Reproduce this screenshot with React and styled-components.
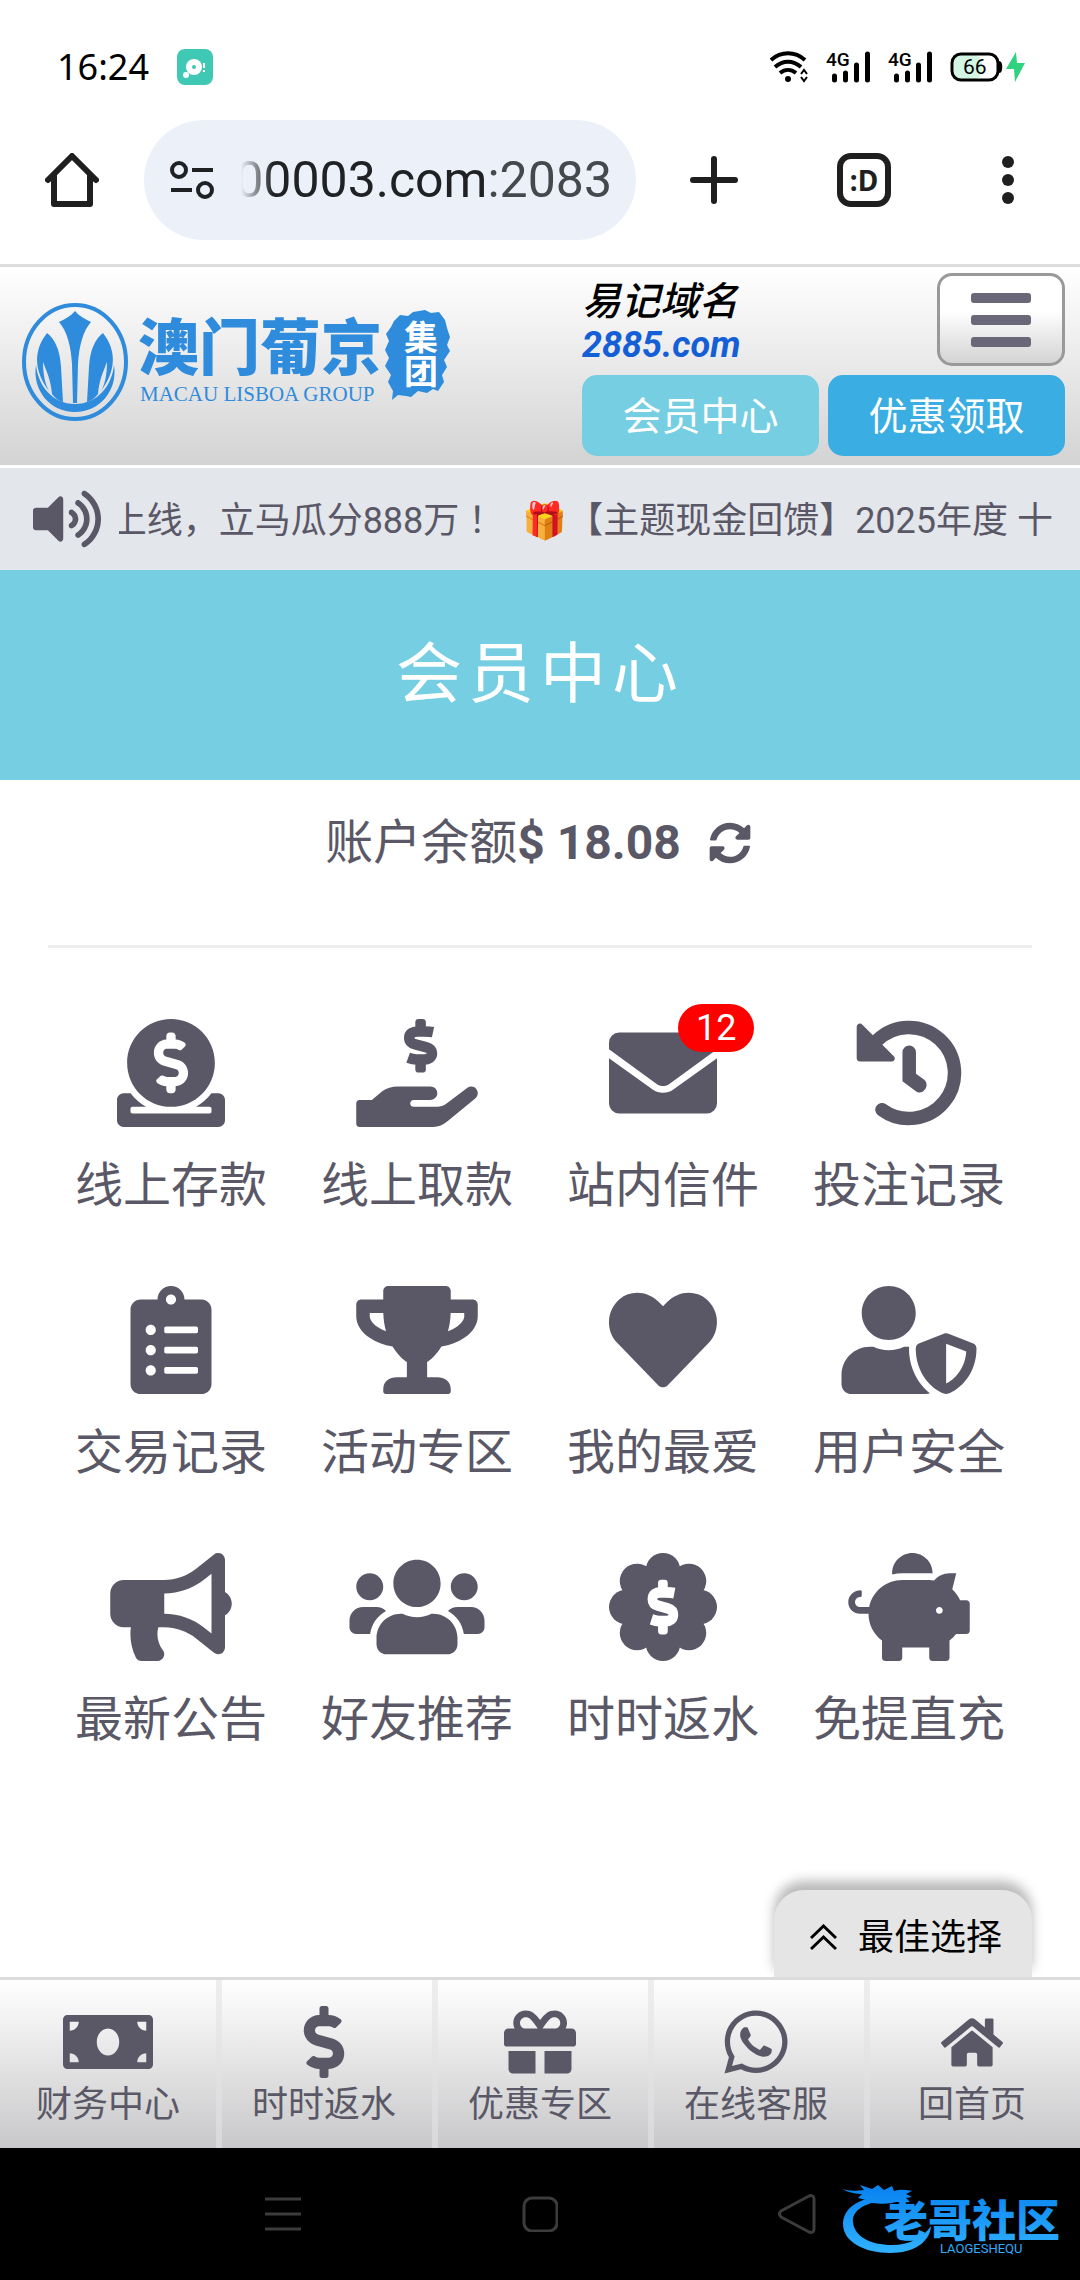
import React from 'react';
import styled, { createGlobalStyle } from 'styled-components';
import {
  FaBullhorn,
  FaClipboardList,
  FaDollarSign,
  FaDonate,
  FaGift,
  FaHeart,
  FaHome,
  FaMoneyBill,
  FaPiggyBank,
  FaSyncAlt,
  FaTrophy,
  FaUserShield,
  FaUsers,
  FaVolumeUp,
  FaWhatsapp
} from 'react-icons/fa';

const ink = '#5a5866';

const GlobalStyle = createGlobalStyle`
  * {
    box-sizing: border-box;
  }
  body {
    margin: 0;
    background: #fff;
    color: ${ink};
    font-family: Roboto, 'Noto Sans CJK SC', sans-serif;
    font-size: 36px;
  }
  button {
    margin: 0;
    padding: 0;
    border: 0;
    background: none;
    color: inherit;
    font: inherit;
  }
  a {
    color: inherit;
    text-decoration: none;
  }
  svg {
    display: block;
    flex: none;
  }
`;

const Page = styled.div`
  display: flex;
  flex-direction: column;
  min-height: 100vh;
`;

/* phone status bar */
const StatusBar = styled.div`
  display: flex;
  align-items: center;
  height: 120px;
  padding: 14px 54px 0 57px;
  color: #000;
`;
const Clock = styled.time`
  font-family: 'Noto Sans', sans-serif;
  font-size: 36px;
  line-height: 48px;
`;
const StatusIcons = styled.div`
  display: flex;
  align-items: center;
  gap: 18px;
  margin-left: auto;
`;
const AppBadge = styled.svg`
  margin-left: 28px;
`;

/* browser toolbar */
const Toolbar = styled.div`
  display: flex;
  align-items: center;
  height: 147px;
  padding: 0 54px 24px 45px;
  border-bottom: 3px solid #dedede;
  color: #1f1f1f;
`;
const AddressBar = styled.button`
  display: flex;
  flex: 1;
  align-items: center;
  gap: 26px;
  min-width: 0;
  height: 120px;
  margin: 0 54px 0 45px;
  padding: 0 24px 0 26px;
  border-radius: 60px;
  background: #ebf0f9;
`;
const Url = styled.span`
  display: flex;
  flex: 1;
  justify-content: flex-end;
  min-width: 0;
  overflow: hidden;
  color: #1f2124;
  font-size: 50px;
  line-height: 60px;
  white-space: nowrap;
  mask-image: linear-gradient(to right, transparent, #000 32px);
`;
const Port = styled.span`
  color: #45494d;
`;
const ToolbarButtons = styled.div`
  display: flex;
  align-items: center;
  gap: 99px;
`;
const TabSwitcher = styled.button`
  width: 54px;
  height: 54px;
  border: 6px solid #1f1f1f;
  border-radius: 14px;
  font-family: 'Noto Sans', sans-serif;
  font-size: 28px;
  font-weight: 700;
  line-height: 38px;
`;

/* site header */
const Header = styled.header`
  display: flex;
  align-items: center;
  justify-content: space-between;
  padding: 6px 15px 9px 18px;
  border-bottom: 3px solid #fff;
  background: linear-gradient(#fff, #d3d3d3);
`;
const HeaderSide = styled.div`
  display: grid;
  grid-template-columns: 1fr 1fr;
  gap: 9px;
  width: 483px;
`;
const Domain = styled.div`
  padding-top: 7px;
  font-style: italic;
  font-size: 39px;
  font-weight: 500;
  line-height: 45px;
  color: #000;
`;
const DomainLink = styled.a`
  display: block;
  color: #155fd6;
  font-size: 36px;
  font-weight: 700;
  line-height: 41px;
`;
const MenuButton = styled.button`
  display: flex;
  flex-direction: column;
  align-items: center;
  justify-content: center;
  gap: 12px;
  justify-self: end;
  width: 128px;
  height: 93px;
  border: 3px solid #999;
  border-radius: 15px;
  background: linear-gradient(#fff 40%, #d3d3d3);
`;
const MenuBar = styled.span`
  width: 60px;
  height: 10px;
  border-radius: 3px;
  background: #696778;
`;
const HeaderLink = styled.a`
  padding-top: 4px;
  border-radius: 15px;
  background: ${props => props.$color};
  color: #fff;
  font-size: 39px;
  line-height: 77px;
  text-align: center;
`;

const Notice = styled.div`
  display: flex;
  align-items: center;
  gap: 18px;
  height: 102px;
  padding: 0 27px 0 33px;
  background: #e3e6eb;
`;
const NoticeText = styled.div`
  display: flex;
  flex: 1;
  justify-content: flex-end;
  min-width: 0;
  overflow: hidden;
  line-height: 48px;
  white-space: pre;
`;
/* full-width mark centred in its box */
const Mark = styled.span`
  font-family: 'Noto Sans CJK TC', sans-serif;
`;

const Title = styled.h1`
  margin: 0;
  background: #75cee1;
  color: #fff;
  font-size: 66px;
  font-weight: 400;
  letter-spacing: 6px;
  line-height: 210px;
  text-align: center;
`;

const Main = styled.main`
  display: flex;
  flex: 1;
  flex-direction: column;
  padding: 0 48px;
`;
const Balance = styled.div`
  display: flex;
  align-items: center;
  justify-content: center;
  height: 168px;
  padding-bottom: 39px;
  border-bottom: 3px solid #eee;
  font-size: 48px;
  line-height: 60px;
  white-space: pre;
`;
const Refresh = styled.button`
  margin: 0 4px 0 28px;
`;

const Grid = styled.nav`
  display: grid;
  grid-template-columns: repeat(4, 1fr);
  padding-top: 71px;
`;
const Tile = styled.a`
  display: flex;
  flex-direction: column;
  align-items: center;
  gap: 29px;
  height: 267px;
  font-size: 48px;
  line-height: 60px;
`;
const TileIcon = styled.span`
  position: relative;
  svg {
    width: 144px;
    height: 108px;
  }
`;
const Count = styled.span`
  position: absolute;
  top: -15px;
  left: 87px;
  padding: 0 18px;
  border-radius: 24px;
  background: #f00;
  color: #fff;
  font-size: 36px;
  line-height: 48px;
`;

const BestPick = styled.button`
  display: flex;
  align-items: center;
  align-self: flex-end;
  gap: 21px;
  height: 87px;
  margin-top: auto;
  padding: 8px 30px 0 36px;
  border-radius: 30px 30px 0 0;
  background: #e5e5e5;
  box-shadow: 0 -9px 12px rgba(0, 0, 0, 0.28);
  clip-path: inset(-30px -30px 0);
  color: #000;
  line-height: 48px;
`;

const BottomNav = styled.nav`
  display: grid;
  grid-template-columns: repeat(5, 1fr);
  border-top: 3px solid #dcdcdc;
  background: linear-gradient(#fff, #c8c8ca);
`;
const BottomItem = styled.a`
  display: flex;
  flex-direction: column;
  align-items: center;
  gap: 6px;
  height: 168px;
  padding-top: 26px;
  line-height: 42px;
  & + & {
    box-shadow: inset 6px 0 rgba(226, 226, 228, 0.6);
  }
`;
const BottomIcon = styled.span`
  display: flex;
  align-items: center;
  height: 72px;
  svg {
    width: 90px;
    height: ${props => props.$size || 72}px;
  }
`;

const SystemBar = styled.div`
  position: relative;
  display: grid;
  grid-template-columns: repeat(3, 1fr);
  align-items: center;
  justify-items: center;
  height: 132px;
  padding: 0 154px;
  background: #000;
`;
const Watermark = styled.svg`
  position: absolute;
  right: 12px;
  bottom: 22px;
`;

const Dollar = ({ transform, color = 'currentColor' }) => (
  <g transform={transform}>
    <path
      fill="none"
      stroke={color}
      strokeWidth="50"
      d="M140 62C126 59 112 59 96 59H68C44 59 27 70 27 90C27 108 40 116 56 120L106 133C124 138 135 146 135 162C135 182 118 192 98 192H62C50 192 36 189 22 184"
    />
    <rect x="56" width="50" height="80" rx="16" fill={color} />
    <rect x="56" y="174" width="50" height="80" rx="16" fill={color} />
  </g>
);

const WithdrawIcon = () => (
  <svg viewBox="0 0 576 512" fill="currentColor">
    <path d="M16 384H74L123 343C142 328 170 320 196 320H352c20 0 35 17 32 37-3 16-17 27-33 27H272c-9 0-16 7-16 16s7 16 16 16H384c15 0 29-4 41-13L524 328c14-11 34-10 45 4s9 33-5 45L434 484c-22 18-43 28-70 28H16c-9 0-16-7-16-16V400c0-9 7-16 16-16z" />
    <Dollar transform="translate(224 0)" />
  </svg>
);

const MailIcon = () => (
  <svg viewBox="0 0 512 512" fill="currentColor">
    <path d="M0 112a48 48 0 0 1 48-48h416a48 48 0 0 1 48 48v31L286 308c-18 13-42 13-60 0L0 143zM0 186l207 148c29 21 69 21 98 0L512 186v214a48 48 0 0 1-48 48H48a48 48 0 0 1-48-48z" />
  </svg>
);

const HistoryIcon = () => (
  <svg viewBox="0 0 512 512" fill="currentColor">
    <path
      fill="none"
      stroke="currentColor"
      strokeWidth="64"
      strokeLinecap="round"
      d="M128 430A216 216 0 1 0 104 102"
    />
    <path d="M8 38c0-14 17-22 27-11l149 149c10 10 3 25-11 25H24a16 16 0 0 1-16-16z" />
    <path d="M225 158a32 32 0 0 1 64 0v101l38 28a32 32 0 0 1 8 42l-6 8a28 28 0 0 1-42 4l-62-46z" />
  </svg>
);

const RebateIcon = () => (
  <svg viewBox="0 0 512 512" fill="currentColor">
    <circle cx="256" cy="256" r="180" />
    {[0, 45, 90, 135, 180, 225, 270, 315].map(angle => (
      <circle key={angle} cx="256" cy="82" r="82" transform={`rotate(${angle} 256 256)`} />
    ))}
    <Dollar color="#fff" transform="translate(181 127) scale(0.92 1.02)" />
  </svg>
);

const SignalIcon = () => (
  <svg width="44" height="44" viewBox="0 -6 44 44">
    <text x="0" y="15" fontFamily="Roboto, sans-serif" fontSize="19" fontWeight="500">
      4G
    </text>
    <g stroke="#000" strokeWidth="5" strokeLinecap="round">
      <path d="M8.500 25v4M19.500 22v7M30.500 14v15M41.500 3v26" />
    </g>
  </svg>
);

const Logo = () => (
  <svg width="436" height="138" viewBox="0 -3 436 138" fill="#2f8bdc" role="img" aria-label="澳门葡京集团">
    <ellipse cx="57" cy="63" rx="51" ry="57" fill="none" stroke="#2f8bdc" strokeWidth="4" />
    <path d="M57 12c4 5 10 8 16 11-8 9-12 24-13 42l-1 39h-4l-1-39c-1-18-5-33-13-42 6-3 12-6 16-11z" />
    <path d="M29 34c8 6 13 17 14 34l2 35c-4-1-8-4-11-8-1-14-6-24-9-32 0 12 2 22 6 29C16 72 15 52 29 34zM85 34c-8 6-13 17-14 34l-2 35c4-1 8-4 11-8 1-14 6-24 9-32 0 12-2 22-6 29 15-20 16-40 2-58z" />
    <path d="M18 66c2 20 16 39 39 39s37-19 39-39c4 25-14 47-39 47S14 91 18 66z" />
    <g fontFamily="'Noto Sans CJK SC', sans-serif" fontWeight="900">
      <text x="120" y="71" fontSize="61">
        澳门葡京
      </text>
      <path d="M376 22l6-6 8 1 5-4 12-2 6 3 8-1 6 8 2 8 3 9-3 8 3 6-6 9 3 7-5 8 2 7-6 9-5-2-6 4-9-2-7 6-5-1-8-1-6 5 1-9-5-9 3-7-6-9 4-8-4-8 4-9-3-7 5-7z" />
      <text x="386" y="51" fontSize="34" fontWeight="700" fill="#fff">
        集
      </text>
      <text x="386" y="85" fontSize="34" fontWeight="700" fill="#fff">
        团
      </text>
    </g>
    <text x="122" y="102" fontFamily="'Liberation Serif', serif" fontSize="21">
      MACAU LISBOA GROUP
    </text>
  </svg>
);

const tiles = [
  { label: '线上存款', Icon: FaDonate },
  { label: '线上取款', Icon: WithdrawIcon },
  { label: '站内信件', Icon: MailIcon, count: 12 },
  { label: '投注记录', Icon: HistoryIcon },
  { label: '交易记录', Icon: FaClipboardList },
  { label: '活动专区', Icon: FaTrophy },
  { label: '我的最爱', Icon: FaHeart },
  { label: '用户安全', Icon: FaUserShield },
  { label: '最新公告', Icon: FaBullhorn },
  { label: '好友推荐', Icon: FaUsers },
  { label: '时时返水', Icon: RebateIcon },
  { label: '免提直充', Icon: FaPiggyBank }
];

const bottomItems = [
  { label: '财务中心', Icon: FaMoneyBill },
  { label: '时时返水', Icon: FaDollarSign },
  { label: '优惠专区', Icon: FaGift },
  { label: '在线客服', Icon: FaWhatsapp },
  { label: '回首页', Icon: FaHome, size: 55 }
];

const App = () => (
  <Page>
    <GlobalStyle />
    <StatusBar>
      <Clock>16:24</Clock>
      <AppBadge width="36" height="36" viewBox="0 0 36 36">
        <rect width="36" height="36" rx="8" fill="#3fc8b4" />
        <circle cx="17" cy="18" r="8" fill="#fff" />
        <circle cx="17" cy="18" r="2" fill="#3fc8b4" />
        <circle cx="9" cy="26" r="3" fill="#fff" />
        <path d="M27 14v5M27 21v2" stroke="#fff" strokeWidth="2" />
      </AppBadge>
      <StatusIcons>
        <svg width="38" height="32" viewBox="0 0 38 32" fill="none" stroke="#000" strokeWidth="4">
          <path d="M1 9C11 0 25 0 35 9M5 16c8-7 18-7 26 0M10 22c5-4 11-4 16 0" />
          <circle cx="18" cy="28" r="3" fill="#000" stroke="none" />
          <path d="M31 23l3-4 3 4M31 26l3 4 3-4" strokeWidth="2" />
        </svg>
        <SignalIcon />
        <SignalIcon />
        <svg width="76" height="32" viewBox="0 0 76 32">
          <rect x="4" y="4" width="28" height="24" rx="8" fill="#d2f5e4" />
          <rect x="2" y="3" width="46" height="26" rx="9" fill="none" stroke="#000" strokeWidth="3" />
          <path d="M49 11c3 0 3 10 0 10z" stroke="#000" strokeWidth="2" />
          <text x="13" y="23" fontFamily="Roboto, sans-serif" fontSize="21">
            66
          </text>
          <path d="M66 1L56 18h8l1 13 10-19h-8z" fill="#2fd27f" />
        </svg>
      </StatusIcons>
    </StatusBar>

    <Toolbar>
      <button aria-label="主页">
        <svg width="54" height="54" viewBox="0 0 54 54" fill="none" stroke="currentColor" strokeWidth="6" strokeLinecap="round" strokeLinejoin="round">
          <path d="M3 27L27 3l24 24M9 22v29h36V22" />
        </svg>
      </button>
      <AddressBar aria-label="地址栏">
        <svg width="45" height="38" viewBox="0 0 45 38" fill="none" stroke="#1f2124" strokeWidth="4">
          <circle cx="9" cy="9" r="7" />
          <circle cx="35" cy="29" r="7" />
          <path d="M22 9h21M1 29h21" />
        </svg>
        <Url>
          00003.com<Port>:2083</Port>
        </Url>
      </AddressBar>
      <ToolbarButtons>
        <button aria-label="新标签页">
          <svg width="48" height="48" viewBox="0 0 48 48" stroke="currentColor" strokeWidth="6" strokeLinecap="round">
            <path d="M3 24h42M24 3v42" />
          </svg>
        </button>
        <TabSwitcher>:D</TabSwitcher>
        <button aria-label="更多">
          <svg width="36" height="48" viewBox="0 0 36 48" fill="currentColor">
            <circle cx="18" cy="6" r="6" />
            <circle cx="18" cy="24" r="6" />
            <circle cx="18" cy="42" r="6" />
          </svg>
        </button>
      </ToolbarButtons>
    </Toolbar>

    <Header>
      <Logo />
      <HeaderSide>
        <Domain>
          易记域名
          <DomainLink href="#domain">2885.com</DomainLink>
        </Domain>
        <MenuButton aria-label="菜单">
          <MenuBar />
          <MenuBar />
          <MenuBar />
        </MenuButton>
        <HeaderLink href="#member" $color="#75cee1">
          会员中心
        </HeaderLink>
        <HeaderLink href="#promo" $color="#3aade2">
          优惠领取
        </HeaderLink>
      </HeaderSide>
    </Header>

    <Notice>
      <FaVolumeUp size={68} />
      <NoticeText>
        <span>
          上线，立马瓜分888万<Mark lang="zh-Hant">！</Mark>
          {'\u00a0\u00a0\u00a0🎁【主题现金回馈】2025年度 十'}
        </span>
      </NoticeText>
    </Notice>

    <Title>会员中心</Title>

    <Main>
      <Balance>
        账户余额<b>$ 18.08</b>
        <Refresh aria-label="刷新">
          <FaSyncAlt size={42} />
        </Refresh>
      </Balance>
      <Grid>
        {tiles.map(({ label, Icon, count }) => (
          <Tile key={label} href="#tile">
            <TileIcon>
              <Icon />
              {count && <Count>{count}</Count>}
            </TileIcon>
            {label}
          </Tile>
        ))}
      </Grid>
      <BestPick>
        <svg width="27" height="27" viewBox="0 0 27 27" fill="none" stroke="currentColor" strokeWidth="3">
          <path d="M1 14L13.500 2 26 14M1 25l12.500-12L26 25" />
        </svg>
        最佳选择
      </BestPick>
    </Main>

    <BottomNav>
      {bottomItems.map(({ label, Icon, size }) => (
        <BottomItem key={label} href="#nav">
          <BottomIcon $size={size}>
            <Icon />
          </BottomIcon>
          {label}
        </BottomItem>
      ))}
    </BottomNav>

    <SystemBar>
      <svg width="36" height="36" viewBox="0 0 36 36" stroke="#3c3c3c" strokeWidth="3">
        <path d="M0 3h36M0 18h36M0 33h36" />
      </svg>
      <svg width="36" height="36" viewBox="0 0 36 36" fill="none" stroke="#3c3c3c" strokeWidth="3">
        <rect x="2" y="2" width="33" height="33" rx="8" />
      </svg>
      <svg width="38" height="40" viewBox="0 0 38 40" fill="none" stroke="#3c3c3c" strokeWidth="3" strokeLinejoin="round">
        <path d="M3 17L31 2c3-1 5 0 5 3v30c0 3-2 4-5 3L3 23c-2-2-2-4 0-6z" />
      </svg>
      <Watermark width="228" height="76" viewBox="0 0 228 76" fill="url(#sky)">
        <defs>
          <linearGradient id="sky" gradientUnits="userSpaceOnUse" x1="0" y1="0" x2="0" y2="76">
            <stop offset="0.1" stopColor="#0a84f0" />
            <stop offset="0.9" stopColor="#2fb0ff" />
          </linearGradient>
        </defs>
        <path d="M38 15C16 17 3 28 3 42C3 60 25 71 50 71C74 71 90 60 91 44C83 56 69 63 52 63C30 63 14 54 13 40C12 30 22 22 40 19z" />
        <path d="M2 7c7 2 14 2 22 1l-4-5 12 4 6-4 6 5 8-4 2 5c6-2 12-1 18 0l-6 3 6 3-6 1 4 4c-8 1-12-1-18 1-6 1-12 1-20 0l-6-3-8-2 4-4C18 12 9 11 2 7z" />
        <text x="44" y="55" fontFamily="'Noto Sans CJK SC', sans-serif" fontSize="44" fontWeight="900">
          老哥社区
        </text>
        <text x="100" y="71" fontFamily="Roboto, sans-serif" fontSize="13">
          LAOGESHEQU
        </text>
      </Watermark>
    </SystemBar>
  </Page>
);

export default App;
